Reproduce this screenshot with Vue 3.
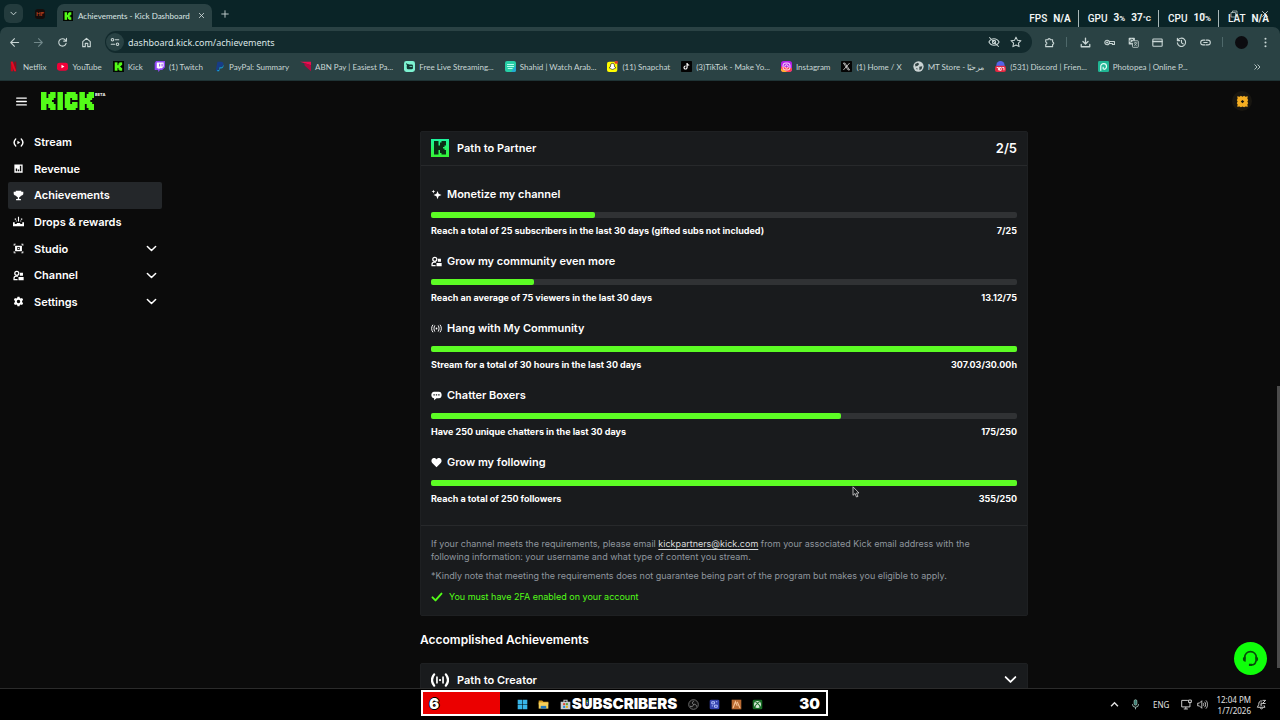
<script setup>
const kickMark =
  '<rect x="0" y="0" width="3" height="9"/><rect x="2" y="3" width="4" height="3"/><rect x="4" y="1" width="3" height="3"/><rect x="5" y="0" width="3" height="3"/><rect x="4" y="5" width="3" height="3"/><rect x="5" y="6" width="3" height="3"/>'

const kickTile =
  '<rect width="16" height="16" fill="#030803"/><g fill="#53fc18" transform="translate(2.5 2) scale(1.35)">' + kickMark + '</g>'

const line = (body, width = 1.6) =>
  `<g fill="none" stroke="currentColor" stroke-width="${width}" stroke-linecap="round" stroke-linejoin="round">${body}</g>`

const icons = {
  back: line('<path d="M14 8H2.5M8 2.5 2.5 8 8 13.5"/>'),
  forward: line('<path d="M2 8h11.5M8 2.5 13.5 8 8 13.5"/>'),
  reload: line('<path d="M13.2 9.2A5.4 5.4 0 1 1 12 4.3l1.6 1.5M13.8 2v4H9.8"/>'),
  home: line('<path d="M2.5 6.8 8 2l5.5 4.8V14h-3.7V9.2H6.2V14H2.5z"/>'),
  tune: line('<circle cx="4" cy="4.5" r="2"/><path d="M8.5 4.5H14M2 11.5h5.5"/><circle cx="12" cy="11.5" r="2"/>', 1.7),
  eyeOff: line('<path d="M2 2l12 12M1.2 8S3.5 3.6 8 3.6 14.8 8 14.8 8 12.5 12.4 8 12.4 1.2 8 1.2 8z"/><circle cx="8" cy="8" r="2.2"/>', 1.4),
  star: line('<path d="M8 1.5l2 4.3 4.6.5-3.4 3.2.9 4.7L8 11.9l-4.1 2.3.9-4.7L1.4 6.3 6 5.8z"/>', 1.4),
  puzzle: line('<path d="M2.5 4h3.3a1.7 1.7 0 0 1 3.4 0h3.3v3.3a1.7 1.7 0 0 1 0 3.4V14h-10v-3.3a1.7 1.7 0 0 0 0-3.4z"/>'),
  download: line('<path d="M8 1.5v8.5M4.3 6.5 8 10.2l3.7-3.7M1.8 10.8v3.4h12.4v-3.4"/>', 1.9),
  key: line('<circle cx="4.5" cy="8" r="3.3"/><circle cx="4.5" cy="8" r=".7"/><path d="M7.8 6.5h7.4v4.5h-3V9.5H7.6"/>'),
  translate: '<rect x="1" y="1" width="9" height="10" rx="1" fill="currentColor"/><rect x="6.5" y="5.5" width="8.5" height="9.5" rx="1" fill="#2a4344" stroke="currentColor" stroke-width="1.2"/><path d="M7.5 4.5A2.5 2.5 0 1 0 7.6 7H5.7" fill="none" stroke="#2a4344" stroke-width="1.2"/><path d="M8.5 8.5h5M11 7.5v1M12.5 8.5c-.5 2-2 3.5-3.5 4M9.5 9.5c.7 1.5 2 2.5 3.3 3" fill="none" stroke="currentColor"/>',
  card: line('<rect x="1.2" y="3" width="13.6" height="10.5" rx="1"/><path d="M1.5 6.5h13" stroke-width="2.4"/>'),
  history: line('<path d="M2.6 5A6 6 0 1 1 2 8.5M2 1.8V5.3H5.5M8 4.8V8.5l2.6 1.6"/>'),
  link: line('<path d="M7 4.5H4.5a3.5 3.5 0 0 0 0 7H7M9 4.5h2.5a3.5 3.5 0 0 1 0 7H9M5.5 8h5"/>'),
  more: '<g fill="currentColor"><circle cx="8" cy="2.5" r="1.5"/><circle cx="8" cy="8" r="1.5"/><circle cx="8" cy="13.5" r="1.5"/></g>',
  chevron: line('<path d="M2 5l6 6 6-6"/>', 2.2),
  close: line('<path d="M3 3l10 10M13 3 3 13"/>', 1.8),
  plus: line('<path d="M8 1.5v13M1.5 8h13"/>', 1.8),
  menu: line('<path d="M1 3h14M1 8h14M1 13h14"/>', 1.9),
  stream: line('<path d="M4 3c-3 3-3 7 0 10M12 3c3 3 3 7 0 10"/>', 1.9) + '<path d="M6.4 5.6v4.8l4-2.4z" fill="currentColor"/>',
  revenue: '<path fill="currentColor" fill-rule="evenodd" d="M2 2h12v12H2zM4 8v4h2V8zM7 9.5V12h2V9.5zM10 4v8h2V4z"/>',
  trophy: '<path fill="currentColor" d="M4 1h8v1.5h3V5c0 2-1.5 3-3.4 3.3C11 9.6 10 10.3 9 10.6V13h2.5v2h-7v-2H7v-2.4c-1-.3-2-1-2.6-2.3C2.5 8 1 7 1 5V2.5h3z"/>',
  drops: '<path fill="currentColor" d="M0 9h2.5v2.5H5L6 10h4l1 1.5h2.5V9H16v6H0zM7.2 1h1.6v7H7.2zM2.5 3.5h2v2h-2zM11.5 3.5h2v2h-2zM4 6.5h1.5V8H4zM10.5 6.5H12V8h-1.5z"/>',
  studio: '<path fill="currentColor" fill-rule="evenodd" d="M3 4h10v8H3zM6.2 5.8v4.4h3.6V5.8zM1 1h3v1.3H2.3V4H1zM12 1h3v3h-1.3V2.3H12zM1 12h1.3v1.7H4V15H1zM13.7 12H15v3h-3v-1.3h1.7z"/><path fill="currentColor" d="M7.2 6.7v2.6L9.3 8z"/>',
  people: line('<circle cx="5.5" cy="4.8" r="2.9"/><path d="M1.5 14v-2c0-2 1.5-3 3.5-3h1.5M1.5 14H6"/>', 1.8) + '<path fill="currentColor" d="M10 4h4.5v4.5H10zM8 10h7.5v4.8H8z"/>',
  gear: '<path fill="currentColor" fill-rule="evenodd" d="M6.5 1h3l.4 2 1.3.7 2-.7 1.5 2.6-1.5 1.5v1.8l1.5 1.5-1.5 2.6-2-.7-1.3.7-.4 2h-3l-.4-2-1.3-.7-2 .7-1.5-2.6 1.5-1.5V7.1L1.3 5.6 2.8 3l2 .7L6.1 3zM8 5.5a2.5 2.5 0 1 0 0 5 2.5 2.5 0 0 0 0-5z"/>',
  sparkle: '<path fill="currentColor" d="M9.5 3l1.6 4 4.2 1.8-4.2 1.8-1.6 4.2-1.6-4.2-4.2-1.8L7.9 7zM3.5 1l.8 1.9 1.9.8-1.9.8-.8 1.9-.8-1.9L.8 3.7l1.9-.8z"/>',
  live: line('<path d="M2.5 3c-2.2 3-2.2 7 0 10M13.5 3c2.2 3 2.2 7 0 10M5.3 4c-1.4 2.5-1.4 5.5 0 8M10.7 4c1.4 2.5 1.4 5.5 0 8"/>', 1.4) + '<circle cx="8" cy="8" r="1.3" fill="currentColor"/>',
  chat: '<path fill="currentColor" fill-rule="evenodd" d="M4.5 2.5h7c2.5 0 4 1.8 4 4.7S14 12 11.5 12H8l-3.5 3v-3C2 12 .5 10 .5 7.2s1.5-4.7 4-4.7zM3.5 6.2V8h2V6.2zM7 6.2V8h2V6.2zM10.5 6.2V8h2V6.2z"/>',
  heart: '<path fill="currentColor" d="M8 15 1.8 8.8C-.4 6.3.6 2 4.2 1.6 6 1.5 7.3 2.4 8 3.6c.7-1.2 2-2.1 3.8-2 3.6.4 4.6 4.7 2.4 7.2z"/>',
  creator: line('<path d="M2.8 3c-2.3 3-2.3 7 0 10M13.2 3c2.3 3 2.3 7 0 10" stroke-width="2"/><path d="M5.3 5.5v5M10.7 5.5v5" stroke-width="1.5"/>') + '<circle cx="8" cy="8" r="1" fill="currentColor"/>',
  check: line('<path d="M2 8.5l4 4L14 3.5"/>', 2.6),
}

const toolbarActions = [
  { icon: 'download', label: 'Downloads' },
  { icon: 'key', label: 'Passwords' },
  { icon: 'translate', label: 'Translate' },
  { icon: 'card', label: 'Payment methods' },
  { icon: 'history', label: 'History' },
  { icon: 'link', label: 'Copy link' },
]

const bookmarks = [
  { text: 'Netflix', icon: '<path fill="#c4071c" d="M4 1h3.5v14H4z"/><path fill="#8f0a18" d="M9 1h3v14H9z"/><path fill="#e50924" d="M4 1h3l5 14H9z"/>' },
  { text: 'YouTube', icon: '<rect y="2.5" width="16" height="11.5" rx="3.5" fill="#f00038"/><path fill="#fff" d="M6.5 5.5v5l4.3-2.5z"/>' },
  { text: 'Kick', icon: kickTile },
  { text: '(1) Twitch', icon: '<path fill="#8e45f4" d="M3 0h13v9l-4 4H9l-3 3v-3H1V3z"/><path fill="#fff" d="M4 2h10v6l-2.5 2.5H8.5l-2 2v-2H4z"/><path fill="#8e45f4" d="M7.5 4H9v4H7.5zM11 4h1.5v4H11z"/>' },
  { text: 'PayPal: Summary', icon: '<path fill="#173c87" d="M5 1h5c3 0 4.5 2 3.5 4.5C13 8 11 9 8.5 9H7l-1 5H2.5z"/><path fill="#159bd7" d="M13.5 5c1.2 3-.5 5.8-4 5.8H8.3L7.5 15h-3l.4-1.8H7l1-4h1.5c2.5 0 3.7-1.5 4-4.2z"/>' },
  { text: 'ABN Pay | Easiest Pa...', icon: '<path fill="#ed0c4f" d="M0 1h16v5z"/><path fill="#b60741" d="M6 3l10 3v9L7 7z"/>' },
  { text: 'Free Live Streaming...', icon: '<rect width="16" height="16" rx="3.5" fill="#7df2d1"/><rect x="4" y="5" width="9" height="7" rx="2" fill="#133a35"/><path d="M6 9h5M3 4l4 2" stroke="#133a35" stroke-width="1.5"/><path d="M8 8h4" stroke="#7df2d1"/>' },
  { text: 'Shahid | Watch Arab...', icon: '<rect width="16" height="16" rx="3" fill="#27cfa6"/><path fill="#22a9d3" d="M9 16h4a3 3 0 0 0 3-3V6z"/><path d="M3 5h10M3 8h10M4 11h7" stroke="#b8fff0" stroke-width="1.6"/>' },
  { text: '(11) Snapchat', icon: '<rect y="1" width="15" height="15" rx="3" fill="#fffc00"/><path d="M8 3.5c2.2 0 3 1.5 2.8 3.7 0 1.5 1 2 2 2.6-1 .8-2 .7-2.3 1.7-1 0-1.5.8-2.5.8s-1.5-.8-2.5-.8c-.3-1-1.3-.9-2.3-1.7 1-.6 2-1.1 2-2.6C5 5 5.8 3.5 8 3.5z" fill="#fff" stroke="#222"/><rect x="11" width="5" height="4" rx="2" fill="#e23a28"/>' },
  { text: '(3)TikTok - Make Yo...', icon: '<rect width="16" height="16" rx="1" fill="#030303"/><path d="M8.8 3v6.5a2.2 2.2 0 1 1-2-2.2M8.8 3.5c.3 1.8 1.5 2.6 3.2 2.7" fill="none" stroke="#fff" stroke-width="1.7"/>' },
  { text: 'Instagram', icon: '<rect width="16" height="16" rx="4" fill="#b41ee8"/><path fill="#ff3b55" d="M0 8l16 2v2a4 4 0 0 1-4 4H4a4 4 0 0 1-4-4z"/><path fill="#ffb52b" d="M0 11l9 5H4a4 4 0 0 1-4-4z"/><g fill="none" stroke="#fff" stroke-width="1.3"><rect x="3" y="3" width="10" height="10" rx="3"/><circle cx="8" cy="8" r="2.5"/></g>' },
  { text: '(1) Home / X', icon: '<rect width="16" height="16" rx="1" fill="#050505"/><path d="M3.5 3h2.2l6.8 10h-2.2zM12.5 3 3.5 13" fill="none" stroke="#ddd" stroke-width="1.2"/>' },
  { text: 'MT Store - مرحبًا', icon: '<circle cx="8" cy="8" r="7.5" fill="#cad3d3"/><path fill="#344" d="M3 4.5l4-2 2 2-2 2.5-3.5 1zM9 8.5l4.5-1-1 4-3 2zM4.5 10l2 .5-.5 2.5z"/>' },
  { text: '(531) Discord | Frien...', icon: '<circle cx="8" cy="6" r="6" fill="#5663e8"/><rect y="7" width="16" height="9" rx="3" fill="#e3263f"/><path d="M2.5 9.5h2.5v4M6.5 9.5H9v4H6.5zM10.5 9.5H13v4" fill="none" stroke="#fff" stroke-width="1.3"/>' },
  { text: 'Photopea | Online P...', icon: '<rect width="16" height="16" rx="2" fill="#20b694"/><path d="M4 14V8a4.2 4.2 0 1 1 4.2 4.2M7.5 12V8.5" fill="none" stroke="#e8fff8" stroke-width="1.7"/>' },
]

const navItems = [
  { label: 'Stream', icon: 'stream' },
  { label: 'Revenue', icon: 'revenue' },
  { label: 'Achievements', icon: 'trophy', active: true },
  { label: 'Drops & rewards', icon: 'drops' },
  { label: 'Studio', icon: 'studio', group: true },
  { label: 'Channel', icon: 'people', group: true },
  { label: 'Settings', icon: 'gear', group: true },
]

const goals = [
  { icon: 'sparkle', title: 'Monetize my channel', text: 'Reach a total of 25 subscribers in the last 30 days (gifted subs not included)', value: 7, max: 25, score: '7/25' },
  { icon: 'people', title: 'Grow my community even more', text: 'Reach an average of 75 viewers in the last 30 days', value: 13.12, max: 75, score: '13.12/75' },
  { icon: 'live', title: 'Hang with My Community', text: 'Stream for a total of 30 hours in the last 30 days', value: 307.03, max: 30, score: '307.03/30.00h' },
  { icon: 'chat', title: 'Chatter Boxers', text: 'Have 250 unique chatters in the last 30 days', value: 175, max: 250, score: '175/250' },
  { icon: 'heart', title: 'Grow my following', text: 'Reach a total of 250 followers', value: 355, max: 250, score: '355/250' },
]

const percent = (goal) => Math.min(100, (goal.value / goal.max) * 100) + '%'

const taskbarApps = [
  { name: 'Start', icon: '<path fill="#38b5e8" d="M1 1h6.6v6.6H1zM8.4 1H15v6.6H8.4zM1 8.4h6.6V15H1zM8.4 8.4H15V15H8.4z"/>' },
  { name: 'File Explorer', icon: '<path fill="#d59a1c" d="M1 2h5l2 2h7v4H1z"/><path fill="#f5cf59" d="M1 5h14v9H1z"/><path fill="#2378bd" d="M4 10h8v4H4z"/>' },
  { name: 'Microsoft Store', icon: '<path fill="#c8cdd0" d="M1 4h14v11H1zM5 1h6v3H9.5V2.5h-3V4H5z"/><path fill="#e2492f" d="M4.5 6h3v3h-3z"/><path fill="#5ba432" d="M8.5 6h3v3h-3z"/><path fill="#278fd4" d="M4.5 10h3v3h-3z"/><path fill="#e5b421" d="M8.5 10h3v3h-3z"/>' },
  { name: 'Browser', icon: '<circle cx="8" cy="8" r="7" fill="#37a552"/><circle cx="8" cy="8" r="3.2" fill="#3d79e8" stroke="#eee" stroke-width="1.4"/>' },
  { name: 'Media', icon: '<circle cx="8" cy="8" r="6" fill="#2c3e81"/>' },
  { name: 'Music', icon: '<circle cx="8" cy="8" r="6" fill="#28833d"/>' },
  { name: 'Editor', icon: '<rect x="2" y="2" width="12" height="12" rx="2" fill="#514287"/>' },
  { name: 'Messages', icon: '<circle cx="8" cy="8" r="6" fill="#255d79"/>' },
  { name: 'OBS Studio', icon: '<circle cx="8" cy="8" r="7" fill="#111" stroke="#777" stroke-width="1.3"/><path d="M8 8c-2-1-2-4 .5-5M8 8c2-1 4.5.5 4.5 3M8 8c0 2.5-3 4-5 2.5" fill="none" stroke="#888" stroke-width="1.4"/>' },
  { name: 'Stream tools', icon: '<rect x="1" y="1" width="14" height="14" rx="2" fill="#3442ad"/><path d="M4 4h4v3H4zM8 9h4v3H8zM10 4h2M4 10h2" fill="none" stroke="#b5c3ff" stroke-width="1.4"/>' },
  { name: 'Game launcher', icon: '<rect x="1" y="1" width="14" height="14" fill="#b96a32"/><path d="M3 13 6.5 4 9 10M9 4l4 9" fill="none" stroke="#f5c193" stroke-width="1.6"/>' },
  { name: 'Xbox', icon: '<rect x="1" y="1" width="14" height="14" rx="2" fill="#176c25"/><circle cx="8" cy="8" r="5" fill="#d8ead8"/><path d="M4 12C5 9 7 7 8 6.3 9 7 11 9 12 12M4.5 4C6 4 7 5 8 6c1-1 2-2 3.5-2" fill="none" stroke="#176c25" stroke-width="1.5"/>' },
]
</script>

<template>
  <div class="screen">
    <header class="browser">
      <div class="tabs">
        <button class="tab-search" aria-label="Search tabs"><svg viewBox="0 0 16 16" v-html="icons.chevron" /></button>
        <button class="pinned" aria-label="Pinned tab">HF</button>
        <div class="tab">
          <svg class="favicon" viewBox="0 0 16 16" v-html="kickTile" />
          <span>Achievements - Kick Dashboard</span>
          <button aria-label="Close tab"><svg viewBox="0 0 16 16" v-html="icons.close" /></button>
        </div>
        <button class="new-tab" aria-label="New tab"><svg viewBox="0 0 16 16" v-html="icons.plus" /></button>
        <div class="window-controls">
          <button aria-label="Minimize"><svg viewBox="0 0 16 16"><path d="M3 8h10" stroke="currentColor" stroke-width="1.5" /></svg></button>
          <button aria-label="Restore"><svg viewBox="0 0 16 16"><path d="M2 5h9v9H2zM5 5V2h9v9h-3" fill="none" stroke="currentColor" stroke-width="1.4" /></svg></button>
          <button aria-label="Close"><svg viewBox="0 0 16 16" v-html="icons.close" /></button>
        </div>
      </div>

      <div class="toolbar">
        <button class="tool" aria-label="Back"><svg viewBox="0 0 16 16" v-html="icons.back" /></button>
        <button class="tool dim" aria-label="Forward"><svg viewBox="0 0 16 16" v-html="icons.forward" /></button>
        <button class="tool" aria-label="Reload"><svg viewBox="0 0 16 16" v-html="icons.reload" /></button>
        <button class="tool" aria-label="Home"><svg viewBox="0 0 16 16" v-html="icons.home" /></button>
        <div class="address">
          <button class="site-info" aria-label="Site information"><svg viewBox="0 0 16 16" v-html="icons.tune" /></button>
          <input aria-label="Address" value="dashboard.kick.com/achievements" />
          <button class="address-action" aria-label="Tracking protection"><svg viewBox="0 0 16 16" v-html="icons.eyeOff" /></button>
          <button class="address-action" aria-label="Bookmark"><svg viewBox="0 0 16 16" v-html="icons.star" /></button>
        </div>
        <button class="tool" aria-label="Extensions"><svg viewBox="0 0 16 16" v-html="icons.puzzle" /></button>
        <span class="separator"></span>
        <button v-for="action in toolbarActions" :key="action.icon" class="tool" :aria-label="action.label">
          <svg viewBox="0 0 16 16" v-html="icons[action.icon]" />
        </button>
        <span class="separator"></span>
        <button class="tool" aria-label="Profile"><span class="avatar"></span></button>
        <button class="tool" aria-label="Menu"><svg viewBox="0 0 16 16" v-html="icons.more" /></button>
      </div>

      <nav class="bookmarks" aria-label="Bookmarks">
        <a v-for="mark in bookmarks" :key="mark.text" href="#">
          <svg viewBox="0 0 16 16" v-html="mark.icon" /><span>{{ mark.text }}</span>
        </a>
        <button aria-label="More bookmarks"><svg viewBox="0 0 16 16"><path d="M3 3l5 5-5 5M9 3l5 5-5 5" fill="none" stroke="currentColor" stroke-width="1.7" /></svg></button>
      </nav>

      <div class="stats">
        <span class="stat">FPS <b>N/A</b></span>
        <span class="stat">GPU <b>3<small>%</small></b><b>37<small>°C</small></b></span>
        <span class="stat">CPU <b>10<small>%</small></b></span>
        <span class="stat">LAT <b>N/A</b></span>
      </div>
    </header>

    <div class="page">
      <header class="page-head">
        <button class="menu" aria-label="Menu"><svg viewBox="0 0 16 16" v-html="icons.menu" /></button>
        <a class="logo" href="#" aria-label="Kick">
          <svg viewBox="0 0 29 9" preserveAspectRatio="none">
            <g v-html="kickMark" />
            <rect x="9" width="3" height="9" />
            <rect x="13" y="1" width="3" height="7" /><rect x="14" width="5" height="3" /><rect x="14" y="6" width="5" height="3" /><rect x="17" y="1" width="3" height="3" /><rect x="17" y="5" width="3" height="3" />
            <g transform="translate(21 0)" v-html="kickMark" />
          </svg>
          <sup>BETA</sup>
        </a>
        <button class="account" aria-label="Account">
          <svg viewBox="0 0 16 16"><path fill="#f5ae22" fill-rule="evenodd" d="M1.500 1.500 4.500 2 6 1l2 1 2-1 1.500 1 3-.5-.5 3 1 1.500-1 2 1 2-1 1.500.5 3-3-.5-1.500 1-2-1-2 1-1.500-1-3 .5.5-3L1 10l1-2-1-2 1-1.500zM8 6 5.800 8 8 10l2.200-2z" /></svg>
        </button>
      </header>

      <div class="body">
        <nav class="sidebar" aria-label="Dashboard">
          <a v-for="item in navItems" :key="item.label" href="#" :class="{ active: item.active }">
            <svg class="nav-icon" viewBox="0 0 16 16" v-html="icons[item.icon]" />
            <span>{{ item.label }}</span>
            <svg v-if="item.group" class="chevron" viewBox="0 0 16 16" v-html="icons.chevron" />
          </a>
        </nav>

        <main class="content">
          <section class="card">
            <div class="card-head">
              <svg class="badge" viewBox="0 0 18 18">
                <defs><linearGradient id="badge-fill" x1="0" y1="0" x2="0" y2="1"><stop stop-color="#1cf5a0" /><stop offset="1" stop-color="#35f432" /></linearGradient></defs>
                <rect width="18" height="18" fill="url(#badge-fill)" />
                <g fill="#0a2c14" transform="translate(3 2) scale(1.5)" v-html="kickMark" />
              </svg>
              <h2>Path to Partner</h2>
              <strong>2/5</strong>
            </div>
            <ul class="goals">
              <li v-for="goal in goals" :key="goal.title">
                <h3><svg viewBox="0 0 16 16" v-html="icons[goal.icon]" />{{ goal.title }}</h3>
                <div class="bar" role="progressbar" :aria-label="goal.title" :aria-valuenow="goal.value" :aria-valuemax="goal.max">
                  <span :style="{ width: percent(goal) }"></span>
                </div>
                <p><span>{{ goal.text }}</span><span>{{ goal.score }}</span></p>
              </li>
            </ul>
            <footer class="notes">
              <p>If your channel meets the requirements, please email <a href="mailto:kickpartners@kick.com">kickpartners@kick.com</a> from your associated Kick email address with the<br />following information: your username and what type of content you stream.</p>
              <p>*Kindly note that meeting the requirements does not guarantee being part of the program but makes you eligible to apply.</p>
              <p class="ok"><svg viewBox="0 0 16 16" v-html="icons.check" />You must have 2FA enabled on your account</p>
            </footer>
          </section>

          <h1>Accomplished Achievements</h1>
          <section class="card">
            <button class="card-head">
              <svg class="badge" viewBox="0 0 16 16" v-html="icons.creator" />
              <span class="card-title">Path to Creator</span>
              <svg class="expand" viewBox="0 0 16 16" v-html="icons.chevron" />
            </button>
          </section>
        </main>
      </div>

      <span class="scroll-thumb"></span>
      <button class="support" aria-label="Support">
        <svg viewBox="0 0 16 16"><path d="M2.5 9V7a5.5 5.5 0 0 1 11 0v2M13 10c0 3-2 4-4.5 4" fill="none" stroke="#07480a" stroke-width="1.5" /><path d="M3.5 6v5C1.7 11 .8 10 .8 8.5S1.7 6 3.5 6zM12.5 6v5c1.8 0 2.7-1 2.7-2.5S14.3 6 12.5 6zM6.5 13h3v2h-3z" fill="#07480a" /></svg>
      </button>
    </div>

    <footer class="taskbar">
      <div class="apps">
        <button v-for="app in taskbarApps" :key="app.name" :aria-label="app.name"><svg viewBox="0 0 16 16" v-html="app.icon" /></button>
      </div>
      <div class="tray">
        <button aria-label="Hidden icons"><svg viewBox="0 0 16 16"><path d="M3 10.5l5-5 5 5" fill="none" stroke="currentColor" stroke-width="2" /></svg></button>
        <button class="mic" aria-label="Microphone"><svg viewBox="0 0 16 16"><rect x="6" y="1" width="4" height="8" rx="2" fill="#377f72" stroke="currentColor" /><path d="M3.5 7.5a4.5 4.5 0 0 0 9 0M8 12v3" fill="none" stroke="currentColor" stroke-width="1.3" /></svg></button>
        <span class="lang">ENG</span>
        <button class="pair" aria-label="Network and volume">
          <svg viewBox="0 0 16 16"><path d="M10 2H1v9.5h12V8M4 14.5h6M7 11.5v3M11 1.5h4V5h-4zM13 5v3" fill="none" stroke="currentColor" stroke-width="1.3" /></svg>
          <svg viewBox="0 0 16 16"><path d="M1 6h2.5L7 2.5v11L3.5 10H1zM9 6c1 1 1 3 0 4M11 4c2 2 2 6 0 8M13 2c3 3 3 9 0 12" fill="none" stroke="currentColor" stroke-width="1.2" /></svg>
        </button>
        <time>12:04 PM<br />1/7/2026</time>
        <button aria-label="Notifications"><svg viewBox="0 0 16 16"><path d="M9 3C5 2 4 5 4 8l-2 4h11l-1.5-3M6 12.5c.5 2.5 3.5 2.5 4 0M9.5 2H14L9.5 6.5H14M6.5 6H9L6.5 9H9" fill="none" stroke="currentColor" stroke-width="1.3" /></svg></button>
      </div>
    </footer>

    <div class="sub-goal">
      <span class="fill"></span>
      <b>6</b><b>SUBSCRIBERS</b><b class="target">30</b>
    </div>
    <svg class="cursor" viewBox="0 0 8 12"><path d="M1 .8v8.5l2-1.8 1.5 3.5 1.5-.6-1.5-3.4H7z" fill="#15181a" stroke="#d8d8d8" stroke-width=".8" /></svg>
  </div>
</template>

<style>
body {
  margin: 0;
  background: #0b0b0b;
}
</style>

<style scoped>
.screen {
  position: relative;
  display: flex;
  flex-direction: column;
  height: 100vh;
  overflow: hidden;
  background: #0b0b0b;
  color: #fff;
  font-family: Inter, "Liberation Sans", sans-serif;
}
.screen * {
  box-sizing: border-box;
}
button {
  display: flex;
  align-items: center;
  justify-content: center;
  padding: 0;
  border: 0;
  background: none;
  color: inherit;
  font: inherit;
}
a {
  color: inherit;
  text-decoration: none;
}
svg {
  display: block;
  flex: none;
}
h1, h2, h3, p, ul {
  margin: 0;
  padding: 0;
}

/* Browser chrome */
.browser {
  position: relative;
  flex: none;
  background: #0a2427;
  color: #c9d6d5;
  font-family: Lato, "Noto Sans", sans-serif;
}
.tabs {
  display: flex;
  align-items: center;
  height: 27px;
  padding-left: 4px;
}
.tab-search {
  width: 19px;
  height: 19px;
  border-radius: 6px;
  background: #233b3d;
}
.tab-search svg {
  width: 7px;
  height: 7px;
}
.pinned {
  width: 10px;
  height: 10px;
  margin-left: 12px;
  border-radius: 3px;
  background: #160d0b;
  color: #b8401d;
  font-size: 6px;
  font-weight: 700;
}
.tab {
  display: flex;
  align-items: center;
  align-self: flex-end;
  width: 155px;
  height: 23px;
  margin-left: 12px;
  padding: 0 6px;
  border-radius: 7px 7px 0 0;
  background: #2a4244;
  color: #dce6e5;
  font-size: 8px;
}
.favicon {
  width: 10px;
  height: 10px;
  margin-right: 5px;
}
.tab span {
  flex: 1;
  white-space: nowrap;
}
.tab button {
  width: 10px;
  height: 10px;
}
.tab button svg {
  width: 7px;
  height: 7px;
}
.new-tab {
  width: 20px;
  height: 20px;
  margin-left: 3px;
}
.new-tab svg {
  width: 8px;
  height: 8px;
}
.window-controls {
  display: flex;
  margin-left: auto;
}
.window-controls button {
  width: 31px;
  height: 27px;
}
.window-controls svg {
  width: 8px;
  height: 8px;
}
.toolbar {
  display: flex;
  align-items: center;
  height: 30px;
  padding: 0 3px 0 2px;
  border-radius: 7px 7px 0 0;
  background: #2a4244;
}
.tool {
  width: 24px;
  height: 24px;
}
.tool svg {
  width: 11px;
  height: 11px;
}
.dim {
  color: #71888a;
}
.address {
  display: flex;
  flex: 1;
  align-items: center;
  height: 22px;
  margin: 0 5px 0 7px;
  padding: 0 5px 0 1px;
  border-radius: 11px;
  background: #122a2d;
}
.site-info {
  width: 18px;
  height: 18px;
  border-radius: 9px;
  background: #294244;
}
.site-info svg {
  width: 10px;
  height: 10px;
}
.address input {
  flex: 1;
  min-width: 0;
  padding: 0 4px;
  border: 0;
  outline: 0;
  background: none;
  color: #dce6e5;
  font: 9px "Noto Sans", "Open Sans", sans-serif;
}
.address-action {
  width: 22px;
  height: 22px;
}
.address-action svg {
  width: 12px;
  height: 12px;
}
.separator {
  width: 1px;
  height: 10px;
  margin: 0 6px 0 5px;
  background: #4e686a;
}
.avatar {
  width: 13px;
  height: 13px;
  border-radius: 7px;
  background: #0c0c10;
}
.bookmarks {
  display: flex;
  align-items: center;
  gap: 11px;
  height: 24px;
  padding: 0 19px 4px 8px;
  border-bottom: 1px solid #1f3335;
  background: #2a4244;
  font-size: 8px;
}
.bookmarks a {
  display: flex;
  gap: 4px;
  align-items: center;
  white-space: nowrap;
}
.bookmarks svg {
  width: 11px;
  height: 11px;
}
.bookmarks button {
  margin-left: auto;
}
.bookmarks button svg {
  width: 8px;
  height: 8px;
}
.stats {
  position: absolute;
  top: 10px;
  right: 11px;
  display: flex;
  color: #f2f6f6;
  font: 500 10px/16px Roboto, sans-serif;
}
.stat {
  display: flex;
  gap: 6px;
  align-items: center;
}
.stat + .stat {
  margin-left: 7px;
  padding-left: 9px;
  border-left: 1px solid #a9b8b8;
}
.stat b {
  font-weight: 700;
}
.stat small {
  font-size: 8px;
}

/* Dashboard page */
.page {
  position: relative;
  display: flex;
  flex: 1;
  flex-direction: column;
  min-height: 0;
  overflow: hidden;
}
.page-head {
  display: flex;
  flex: none;
  align-items: center;
  height: 40px;
  padding: 0 28px 0 16px;
}
.menu svg {
  width: 11px;
  height: 11px;
}
.logo {
  display: flex;
  gap: 1px;
  align-items: flex-start;
  margin-left: 14px;
  fill: #53fc18;
}
.logo svg {
  width: 53px;
  height: 18px;
}
.logo sup {
  font-size: 4px;
  font-weight: 700;
  line-height: 5px;
}
.account {
  width: 20px;
  height: 20px;
  margin-left: auto;
  border-radius: 10px;
  background: #181611;
}
.account svg {
  width: 13px;
  height: 13px;
}
.body {
  display: flex;
  flex: 1;
  min-height: 0;
  padding-right: 2px;
}
.sidebar {
  display: grid;
  flex: none;
  grid-auto-rows: 1fr;
  width: 170px;
  height: 194px;
  padding: 8px 8px 0;
}
.sidebar a {
  display: flex;
  align-items: center;
  width: 154px;
  padding: 0 5px;
  border-radius: 2px;
  font-size: 11px;
  font-weight: 600;
}
.sidebar .active {
  background: #24272a;
}
.nav-icon {
  width: 11px;
  height: 11px;
  margin-right: 10px;
}
.chevron {
  width: 11px;
  height: 11px;
  margin-left: auto;
}
.content {
  flex: 1;
  max-width: 608px;
  margin: 0 auto;
  padding-top: 10px;
}
.card {
  background: #191b1d;
  border: 1px solid #1e2022;
  border-radius: 2px;
}
.card-head {
  display: flex;
  gap: 8px;
  align-items: center;
  width: 100%;
  height: 34px;
  padding: 0 10px 2px;
  border-bottom: 1px solid #27292b;
}
.badge {
  width: 18px;
  height: 18px;
}
.card-head h2, .card-title {
  font-size: 11px;
  font-weight: 600;
}
.card-head strong {
  margin-left: auto;
  font-size: 13px;
  font-weight: 600;
}
.expand {
  width: 13px;
  height: 13px;
  margin-left: auto;
}
.goals {
  display: flex;
  flex-direction: column;
  gap: 12px;
  padding: 18px 10px;
  list-style: none;
}
.goals h3 {
  display: flex;
  gap: 5px;
  align-items: center;
  font-size: 11px;
  font-weight: 600;
  line-height: 20px;
}
.goals h3 svg {
  width: 11px;
  height: 11px;
}
.bar {
  height: 6px;
  margin: 8px 0 5px;
  border-radius: 2px;
  background: #303234;
}
.bar span {
  display: block;
  height: 6px;
  border-radius: 2px;
  background: #5cfc24;
}
.goals p {
  display: flex;
  justify-content: space-between;
  font-size: 9px;
  font-weight: 700;
  line-height: 16px;
}
.notes {
  display: flex;
  flex-direction: column;
  gap: 6px;
  padding: 11px 10px 12px;
  border-top: 1px solid #27292b;
  color: #8f969d;
  font-size: 9px;
  line-height: 13px;
}
.notes a {
  color: #d9dcde;
  text-decoration: underline;
  text-underline-offset: 2px;
}
.notes .ok {
  display: flex;
  gap: 6px;
  align-items: center;
  margin-top: 2px;
  color: #53fc18;
}
.ok svg {
  width: 12px;
  height: 12px;
}
.content h1 {
  margin: 14px 0 13px;
  font-size: 12px;
  font-weight: 600;
  line-height: 20px;
}
.scroll-thumb {
  position: absolute;
  right: 0;
  bottom: 20px;
  width: 3px;
  height: 282px;
  background: #4b4b4b;
}
.support {
  position: absolute;
  right: 13px;
  bottom: 13px;
  width: 33px;
  height: 33px;
  border-radius: 17px;
  background: #0fff0a;
}
.support svg {
  width: 17px;
  height: 17px;
}

/* Taskbar */
.taskbar {
  position: relative;
  display: flex;
  flex: none;
  align-items: center;
  justify-content: center;
  height: 32px;
  border-top: 1px solid #2b2b2b;
  background: #000;
  font-family: "Noto Sans", "Open Sans", sans-serif;
}
.apps {
  display: flex;
  justify-content: space-between;
  width: 246px;
}
.apps svg {
  width: 11px;
  height: 11px;
}
.apps button {
  width: 11px;
}
.tray {
  position: absolute;
  right: 13px;
  display: flex;
  align-items: center;
  color: #e2e2e2;
  font-size: 8px;
}
.tray svg {
  width: 11px;
  height: 11px;
}
.mic {
  margin-left: 10px;
  color: #a5c4bc;
}
.lang {
  margin-left: 12px;
}
.pair {
  gap: 5px;
  margin-left: 12px;
}
.tray time {
  margin: 0 5px 0 8px;
  line-height: 11px;
  text-align: right;
}

/* Stream overlay */
.sub-goal {
  position: absolute;
  bottom: 4px;
  left: calc(50% - 219px);
  display: grid;
  grid-template-columns: 1fr auto 1fr;
  align-items: center;
  width: 407px;
  height: 26px;
  padding: 0 6px;
  border: 2px solid #fff;
  font-size: 15px;
  font-weight: 900;
  text-shadow: 1px 0 #000, -1px 0 #000, 0 1px #000, 0 -1px #000;
}
.sub-goal .fill {
  position: absolute;
  top: 0;
  bottom: 0;
  left: 0;
  width: 77px;
  background: #eb0000;
}
.sub-goal b {
  position: relative;
}
.target {
  text-align: right;
}
.cursor {
  position: absolute;
  top: 486px;
  left: 852px;
  width: 8px;
  height: 12px;
}
</style>
